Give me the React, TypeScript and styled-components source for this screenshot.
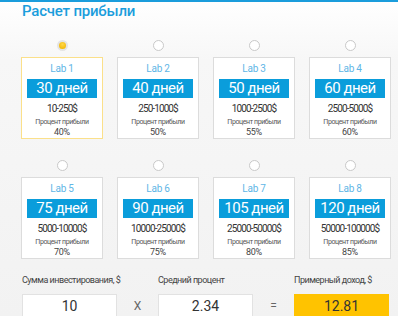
import React, { FC, useState } from 'react'
import styled, { createGlobalStyle } from 'styled-components'

const GlobalStyle = createGlobalStyle`
    body {
        margin: 0;
        font-family: Roboto, 'Liberation Sans', Arial, sans-serif;
        background: linear-gradient(180deg, #ffffff 0px, #f7f7f7 60px, #f2f2f2 316px);
        min-height: 316px;
        overflow: hidden;
    }
`
const Page = styled.div`
    border-top: 2px solid #1b9ddc;
    padding: 0 7px 0 21px;
`
const Title = styled.h2`
    margin: 0;
    height: 20px;
    line-height: 19px;
    font-size: 15px;
    font-weight: 500;
    color: #1b9ddc;
    padding-left: 1px;
    letter-spacing: -0.2px;
`
const Grid = styled.div`
    display: grid;
    grid-template-columns: repeat(4, 82px);
    column-gap: 14px;
    row-gap: 21px;
    margin-top: 18px;
`
const Plan = styled.div`
    display: flex;
    flex-direction: column;
    align-items: center;
    gap: 6px;
    cursor: pointer;
`
const Radio = styled.span<{ checked: boolean }>`
    box-sizing: border-box;
    width: 11px;
    height: 11px;
    border-radius: 50%;
    border: ${props => (props.checked ? '2px solid #e4e4e4' : '1px solid #c9c9c9')};
    background: ${props => (props.checked ? 'radial-gradient(circle at 50% 35%, #ffd84a 0, #f2b705 80%)' : '#fff')};
`
const Card = styled.div<{ selected: boolean }>`
    box-sizing: border-box;
    width: 82px;
    height: 82px;
    background: #fff;
    border: 1px solid ${props => (props.selected ? '#fbe08a' : '#dcdcdc')};
    display: flex;
    flex-direction: column;
    align-items: center;
    padding: 5px 5px 0;
    text-align: center;
`
const Lab = styled.div`
    font-size: 10px;
    line-height: 12px;
    color: #5fb6e6;
    letter-spacing: -0.2px;
`
const Days = styled.div`
    margin-top: 4px;
    align-self: stretch;
    height: 19px;
    background: #0a9ddb;
    color: #fff;
    font-size: 15px;
    line-height: 19px;
    letter-spacing: -0.5px;
`
const Range = styled.div`
    margin-top: 5px;
    font-size: 10px;
    line-height: 12px;
    color: #333;
    letter-spacing: -0.9px;
`
const Caption = styled.div`
    margin-top: 3px;
    font-size: 7px;
    line-height: 8px;
    color: #555;
    letter-spacing: -0.4px;
`
const Percent = styled.div`
    margin-top: 1px;
    font-size: 9px;
    line-height: 11px;
    color: #444;
    letter-spacing: -0.3px;
`
const Calc = styled.div`
    display: grid;
    grid-template-columns: 95px 41px 95px 41px 95px;
    grid-template-rows: 11px 23px;
    row-gap: 8px;
    margin-top: 16px;
    padding-left: 1px;
`
const Label = styled.div`
    font-size: 9px;
    line-height: 11px;
    color: #444;
    white-space: nowrap;
    letter-spacing: -0.5px;
`
const Field = styled.div<{ accent?: boolean }>`
    box-sizing: border-box;
    height: 23px;
    background: ${props => (props.accent ? '#ffc300' : '#fff')};
    border: 1px solid ${props => (props.accent ? '#ffc300' : '#e2e2e2')};
    display: flex;
    align-items: center;
    justify-content: center;
    font-size: 14px;
    color: #333;
`
const Sign = styled.div`
    display: flex;
    align-items: center;
    justify-content: center;
    font-size: 12px;
    color: #666;
`

const plans = [
    { lab: 'Lab 1', days: 30, range: '10-250$', percent: 40 },
    { lab: 'Lab 2', days: 40, range: '250-1000$', percent: 50 },
    { lab: 'Lab 3', days: 50, range: '1000-2500$', percent: 55 },
    { lab: 'Lab 4', days: 60, range: '2500-5000$', percent: 60 },
    { lab: 'Lab 5', days: 75, range: '5000-10000$', percent: 70 },
    { lab: 'Lab 6', days: 90, range: '10000-25000$', percent: 75 },
    { lab: 'Lab 7', days: 105, range: '25000-50000$', percent: 80 },
    { lab: 'Lab 8', days: 120, range: '50000-100000$', percent: 85 },
]

const App: FC = () => {
    const [current, setCurrent] = useState(0)
    return (
        <Page>
            <GlobalStyle />
            <Title>Расчет прибыли</Title>
            <Grid>
                {plans.map((p, i) => (
                    <Plan key={i} onClick={() => setCurrent(i)}>
                        <Radio checked={current === i} />
                        <Card selected={current === i}>
                            <Lab>{p.lab}</Lab>
                            <Days>{p.days} дней</Days>
                            <Range>{p.range}</Range>
                            <Caption>Процент прибыли</Caption>
                            <Percent>{p.percent}%</Percent>
                        </Card>
                    </Plan>
                ))}
            </Grid>
            <Calc>
                <Label>Сумма инвестирования, $</Label>
                <div />
                <Label>Средний процент</Label>
                <div />
                <Label>Примерный доход, $</Label>
                <Field>10</Field>
                <Sign>X</Sign>
                <Field>2.34</Field>
                <Sign>=</Sign>
                <Field accent>12.81</Field>
            </Calc>
        </Page>
    )
}

export default App
